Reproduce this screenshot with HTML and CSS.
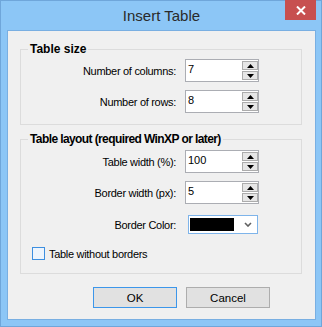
FILE: index.html
```html
<!DOCTYPE html>
<html>
  <head>
    <meta name="viewport" content="width=device-width, initial-scale=1.0" />
    <link rel="stylesheet" href="styles.css">
  </head>

  <body>
    <div class="window">
      <div class="titlebar">
        <span></span>
        <div class="title">Insert Table</div>
        <div class="close">
          <svg width="10" height="9" viewBox="0 0 10 9">
            <path d="M1 0.5 L9 8.5 M9 0.5 L1 8.5" stroke="#fff" stroke-width="2" fill="none" />
          </svg>
        </div>
      </div>

      <div class="client">
        <fieldset class="group group-size">
          <legend>Table size</legend>

          <div class="row">
            <label class="label">Number of columns:</label>
            <div class="spin">
              <span class="value">7</span>
              <div class="arrows">
                <span class="arrow"><svg width="7" height="4" viewBox="0 0 7 4"><path d="M3.5 0 L7 4 L0 4 Z" /></svg></span>
                <span class="arrow"><svg width="7" height="4" viewBox="0 0 7 4"><path d="M0 0 L7 0 L3.5 4 Z" /></svg></span>
              </div>
            </div>
          </div>

          <div class="row">
            <label class="label">Number of rows:</label>
            <div class="spin">
              <span class="value">8</span>
              <div class="arrows">
                <span class="arrow"><svg width="7" height="4" viewBox="0 0 7 4"><path d="M3.5 0 L7 4 L0 4 Z" /></svg></span>
                <span class="arrow"><svg width="7" height="4" viewBox="0 0 7 4"><path d="M0 0 L7 0 L3.5 4 Z" /></svg></span>
              </div>
            </div>
          </div>
        </fieldset>

        <fieldset class="group group-layout">
          <legend>Table layout (required WinXP or later)</legend>

          <div class="row">
            <label class="label">Table width (%):</label>
            <div class="spin">
              <span class="value">100</span>
              <div class="arrows">
                <span class="arrow"><svg width="7" height="4" viewBox="0 0 7 4"><path d="M3.5 0 L7 4 L0 4 Z" /></svg></span>
                <span class="arrow"><svg width="7" height="4" viewBox="0 0 7 4"><path d="M0 0 L7 0 L3.5 4 Z" /></svg></span>
              </div>
            </div>
          </div>

          <div class="row">
            <label class="label">Border width (px):</label>
            <div class="spin">
              <span class="value">5</span>
              <div class="arrows">
                <span class="arrow"><svg width="7" height="4" viewBox="0 0 7 4"><path d="M3.5 0 L7 4 L0 4 Z" /></svg></span>
                <span class="arrow"><svg width="7" height="4" viewBox="0 0 7 4"><path d="M0 0 L7 0 L3.5 4 Z" /></svg></span>
              </div>
            </div>
          </div>

          <div class="row row-color">
            <label class="label">Border Color:</label>
            <div class="combo">
              <span class="swatch"></span>
              <span class="drop">
                <svg width="8" height="5" viewBox="0 0 8 5">
                  <path d="M1 1 L4 4 L7 1" stroke="#606060" stroke-width="1.6" fill="none" />
                </svg>
              </span>
            </div>
          </div>

          <div class="check-row">
            <span class="checkbox"></span>
            <span class="check-label">Table without borders</span>
          </div>
        </fieldset>

        <div class="buttons">
          <button type="button" class="btn btn-default">OK</button>
          <button type="button" class="btn">Cancel</button>
        </div>
      </div>
    </div>
  </body>
</html>
```

FILE: styles.css
```css
body {
  margin: 0;
  background: #ffffff;
  font-family: 'Liberation Sans', Arial, sans-serif;
}

.window {
  width: 322px;
  height: 327px;
  box-sizing: border-box;
  border: 1px solid #6fa6da;
  background: #8cc6f6;
  padding: 0 5px 6px 6px;
  display: flex;
  flex-direction: column;
}

.titlebar {
  height: 29px;
  display: grid;
  grid-template-columns: 1fr auto 1fr;
  align-items: start;
}

.title {
  line-height: 29px;
  font-size: 15px;
  color: #2a2a2a;
}

.close {
  justify-self: end;
  width: 31px;
  height: 20px;
  margin-top: -1px;
  background: #c75050;
  display: flex;
  align-items: center;
  justify-content: center;
}

.client {
  flex: 1;
  box-sizing: border-box;
  border: 1px solid #79afe2;
  background: #f0f0f0;
  padding: 0 13px 0 12px;
  display: flex;
  flex-direction: column;
}

/* group boxes */
.group {
  margin: 0;
  padding: 0;
  min-width: 0;
  border: 1px solid #dcdcdc;
}

.group legend {
  margin-left: 7px;
  padding: 0 2px;
  line-height: 16px;
  font-size: 12px;
  font-weight: bold;
  color: #000;
}

.group-layout legend {
  letter-spacing: -0.6px;
}

.group-size {
  margin-top: 10px;
  padding: 2px 0 11px 0;
}

.group-layout {
  margin-top: 6px;
  padding: 3px 0 13px 0;
}

.row {
  display: flex;
  align-items: center;
  height: 23px;
}

.row + .row {
  margin-top: 8px;
}

.row.row-color {
  height: 19px;
  margin-top: 11px;
}

.label {
  width: 155px;
  margin-right: 9px;
  text-align: right;
  font-size: 11px;
  letter-spacing: -0.3px;
  color: #000;
}

/* spinner */
.spin {
  width: 74px;
  height: 23px;
  box-sizing: border-box;
  border: 1px solid #abadb3;
  background: #fff;
  display: flex;
}

.spin .value {
  flex: 1;
  padding: 3px 0 0 2px;
  font-size: 11px;
  color: #000;
}

.arrows {
  width: 16px;
  padding: 1px 0;
  display: flex;
  flex-direction: column;
  gap: 1px;
}

.arrow {
  height: 9px;
  box-sizing: border-box;
  border: 1px solid #acacac;
  background: #e6e6e6;
  display: flex;
  align-items: center;
  justify-content: center;
}

.arrow svg {
  fill: #000;
}

/* colour combo */
.combo {
  width: 70px;
  height: 19px;
  margin-left: 3px;
  box-sizing: border-box;
  border: 1px solid #7eb4ea;
  background: #fff;
  display: flex;
  align-items: center;
}

.swatch {
  width: 44px;
  height: 13px;
  margin-left: 1px;
  background: #000;
}

.drop {
  flex: 1;
  display: flex;
  justify-content: center;
  padding-left: 4px;
}

/* checkbox */
.check-row {
  margin-top: 13px;
  height: 13px;
  display: flex;
  align-items: center;
}

.checkbox {
  width: 13px;
  height: 13px;
  box-sizing: border-box;
  margin-left: 11px;
  border: 1px solid #3d8fe0;
  background: #eef5fd;
}

.check-label {
  margin-left: 4px;
  font-size: 11px;
  letter-spacing: -0.3px;
  color: #000;
}

/* dialog buttons */
.buttons {
  margin-top: 13px;
  padding-left: 73px;
  display: flex;
  gap: 9px;
}

.btn {
  width: 84px;
  height: 21px;
  padding: 0;
  border: 1px solid #adadad;
  background: #e1e1e1;
  font-family: 'Liberation Sans', Arial, sans-serif;
  font-size: 11.5px;
  color: #000;
}

.btn-default {
  border-color: #3c96ea;
}
```
